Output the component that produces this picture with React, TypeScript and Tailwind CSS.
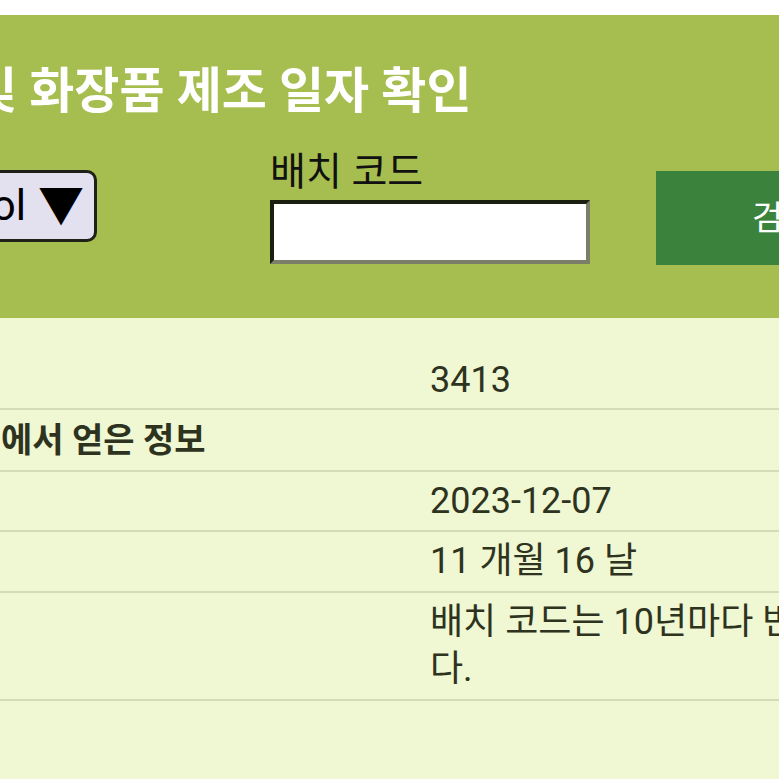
import React from "react";

type Row = {
  value?: string[];
  heading?: string;
  h: string;
  pad?: string;
};

const rows: Row[] = [
  { value: ["3413"], h: "h-[92px]", pad: "pt-[34px]" },
  { heading: "에서 얻은 정보", h: "h-[62px]" },
  { value: ["2023-12-07"], h: "h-[60px]" },
  { value: ["11 개월 16 날"], h: "h-[61px]" },
  { value: ["배치 코드는 10년마다 반복됩니", "다."], h: "h-[108px]" },
];

const App: React.FC = () => {
  return (
    <div className="w-[779px] h-[779px] overflow-hidden bg-[#eff7d3] font-['Roboto','Noto_Sans_CJK_KR',sans-serif]">
      <div className="h-[15px] bg-white" />
      {/* 상단 검색 영역 */}
      <header className="h-[303px] bg-[#a6bd4f] pt-[47px]">
        <h1 className="-ml-[28px] whitespace-nowrap text-[49px] font-bold leading-[60px] text-white">
          및 화장품 제조 일자 확인
        </h1>
        <div className="mt-[28px] flex items-start">
          <div className="-ml-[40px] mt-[20px] flex h-[72px] w-[137px] shrink-0 items-center justify-end rounded-[10px] border-[3px] border-[#1f2118] bg-[#e3e1f0] pr-[10px] text-[42px] leading-none text-black">
            <span>ol</span>
            <span className="ml-[12px] text-[46px] leading-none">▼</span>
          </div>
          <div className="ml-[173px] flex shrink-0 flex-col">
            <label className="whitespace-nowrap text-[39px] leading-[44px] text-[#111]">
              배치 코드
            </label>
            <input
              type="text"
              className="mt-[6px] h-[64px] w-[320px] border-4 border-t-[#1b1f10] border-l-[#1b1f10] border-r-[#7b7e68] border-b-[#7b7e68] bg-white outline-none"
            />
          </div>
          <button className="ml-[66px] mt-[21px] flex h-[94px] w-[200px] shrink-0 items-center bg-[#3b833d] pl-[96px] text-[34px] text-white whitespace-nowrap">
            검색
          </button>
        </div>
      </header>
      {/* 결과 표 */}
      <div>
        {rows.map((row, i) => (
          <div
            key={i}
            className={`${row.h} ${row.pad ?? ""} flex items-center border-b-2 border-[#d3dcb6] text-[#2e3320]`}
          >
            {row.heading ? (
              <div className="ml-[1px] whitespace-nowrap text-[34px] font-bold">
                {row.heading}
              </div>
            ) : (
              <div className="ml-[430px] whitespace-nowrap text-[36px] leading-[47px]">
                {row.value!.map((line, j) => (
                  <div key={j}>{line}</div>
                ))}
              </div>
            )}
          </div>
        ))}
      </div>
    </div>
  );
};

export default App;
